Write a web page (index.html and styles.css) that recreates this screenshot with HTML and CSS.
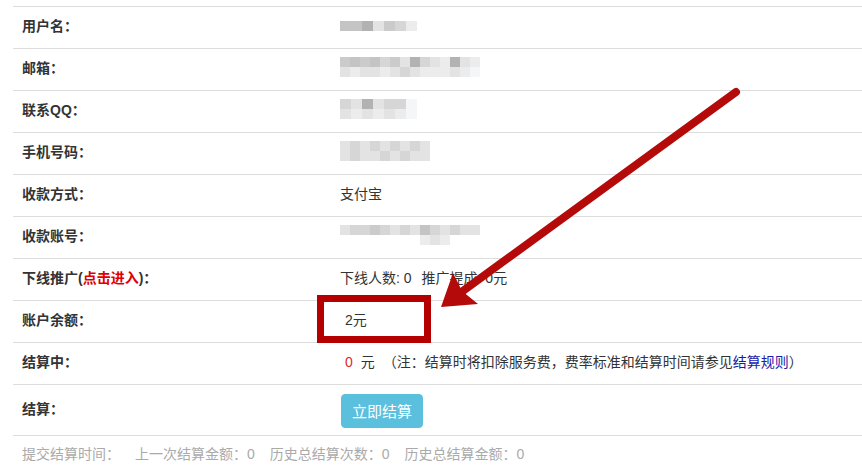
FILE: index.html
```html
<!DOCTYPE html>
<html lang="zh-CN">
<head>
<meta charset="utf-8">
<title>账户信息</title>
<link rel="stylesheet" href="styles.css">
</head>
<body>
<div class="page">
  <div class="table">
    <div class="row">
      <div class="label">用户名：</div>
      <div class="value">
        <span class="mosaic cols7">
          <i class="s2"></i><i class="s2"></i><i class="s4"></i><i class="s6"></i><i class="s3"></i><i class="s5"></i><i class="s7"></i>
        </span>
      </div>
    </div>
    <div class="row">
      <div class="label">邮箱：</div>
      <div class="value">
        <span class="mosaic cols14">
          <i class="s3"></i><i class="s2"></i><i class="s3"></i><i class="s2"></i><i class="s5"></i><i class="s3"></i><i class="s6"></i><i class="s4"></i><i class="s5"></i><i class="s6"></i><i class="s7"></i><i class="s4"></i><i class="s6"></i><i class="s7"></i>
          <i class="s6"></i><i class="s7"></i><i class="s6"></i><i class="s6"></i><i class="s7"></i><i class="s6"></i><i class="s5"></i><i class="s6"></i><i class="s7"></i><i class="s7"></i><i class="s7"></i><i class="s6"></i><i class="s7"></i><i class="s8"></i>
        </span>
      </div>
    </div>
    <div class="row">
      <div class="label">联系QQ：</div>
      <div class="value">
        <span class="mosaic cols7">
          <i class="s5"></i><i class="s6"></i><i class="s4"></i><i class="s6"></i><i class="s5"></i><i class="s5"></i><i class="s8"></i>
          <i class="s6"></i><i class="s7"></i><i class="s6"></i><i class="s7"></i><i class="s6"></i><i class="s7"></i><i class="s8"></i>
        </span>
      </div>
    </div>
    <div class="row">
      <div class="label">手机号码：</div>
      <div class="value">
        <span class="mosaic cols9">
          <i class="s6"></i><i class="s5"></i><i class="s6"></i><i class="s5"></i><i class="s6"></i><i class="s5"></i><i class="s6"></i><i class="s5"></i><i class="s6"></i>
          <i class="s6"></i><i class="s5"></i><i class="s6"></i><i class="s6"></i><i class="s5"></i><i class="s6"></i><i class="s5"></i><i class="s6"></i><i class="s6"></i>
        </span>
      </div>
    </div>
    <div class="row">
      <div class="label">收款方式：</div>
      <div class="value">支付宝</div>
    </div>
    <div class="row">
      <div class="label">收款账号：</div>
      <div class="value">
        <span class="mosaic cols14">
          <i class="s6"></i><i class="s5"></i><i class="s5"></i><i class="s3"></i><i class="s5"></i><i class="s6"></i><i class="s5"></i><i class="s6"></i><i class="s2"></i><i class="s5"></i><i class="s6"></i><i class="s5"></i><i class="s6"></i><i class="s6"></i>
          <i class="s9"></i><i class="s9"></i><i class="s9"></i><i class="s9"></i><i class="s9"></i><i class="s9"></i><i class="s9"></i><i class="s9"></i><i class="s7"></i><i class="s6"></i><i class="s7"></i><i class="s9"></i><i class="s9"></i><i class="s9"></i>
        </span>
      </div>
    </div>
    <div class="row">
      <div class="label">下线推广<span class="paren">(</span><span class="hot">点击进入</span><span class="paren">)</span>：</div>
      <div class="value">下线人数: 0<span class="gap">推广提成: 0元</span></div>
    </div>
    <div class="row">
      <div class="label">账户余额：</div>
      <div class="value"><span class="indent">2元</span></div>
    </div>
    <div class="row">
      <div class="label">结算中：</div>
      <div class="value"><span class="indent zero">0</span><span class="unit">元</span><span class="note">（注：结算时将扣除服务费，费率标准和结算时间请参见<a class="rule" href="#">结算规则</a>）</span></div>
    </div>
    <div class="row row-btn">
      <div class="label">结算：</div>
      <div class="value"><button class="btn" type="button">立即结算</button></div>
    </div>
    <div class="footer">
      <span class="stat">提交结算时间：</span><span class="stat">上一次结算金额：0</span><span class="stat">历史总结算次数：0</span><span class="stat">历史总结算金额：0</span>
    </div>
  </div>

  <div class="highlight"></div>
  <svg class="arrow" width="862" height="470" viewBox="0 0 862 470" xmlns="http://www.w3.org/2000/svg">
    <line x1="736" y1="92" x2="456" y2="296" stroke="#b50a0a" stroke-width="8" stroke-linecap="round"/>
    <polygon points="441,307 453,273 462,291 478,304" fill="#b50a0a"/>
  </svg>
</div>
</body>
</html>
```
FILE: styles.css
```css
html, body {
  margin: 0;
  padding: 0;
  background: #fff;
}

.page {
  position: relative;
  width: 862px;
  height: 470px;
  overflow: hidden;
  font-family: "Liberation Sans", "Noto Sans CJK SC", sans-serif;
  font-size: 14px;
  color: #333;
}

.table {
  margin-left: 13px;
  padding-top: 6px;
}

.row {
  display: grid;
  grid-template-columns: 327px 1fr;
  align-items: center;
  height: 42px;
  box-sizing: border-box;
  border-top: 1px solid #ddd;
}

.row > .label,
.row > .value {
  margin-bottom: 6px;
}

.row-btn {
  height: 51px;
}

.row-btn > .label {
  margin-bottom: 4px;
}

.row-btn > .value {
  margin-bottom: 0;
}

.label {
  padding-left: 9px;
  font-weight: bold;
  color: #333;
  white-space: nowrap;
}

.paren {
  font-weight: bold;
  color: #333;
}

.hot {
  color: #e00000;
}

.value {
  white-space: nowrap;
  color: #333;
}

.gap {
  margin-left: 10px;
}

.indent {
  margin-left: 5px;
}

.zero {
  color: #e0282d;
}

.unit {
  margin-left: 8px;
}

.note {
  margin-left: 8px;
}

.rule {
  color: #1b1ba8;
  text-decoration: none;
}

.btn {
  font-family: "Liberation Sans", "Noto Sans CJK SC", sans-serif;
  font-size: 15px;
  color: #fff;
  background: #5bc0de;
  border: 1px solid #5bc0de;
  border-radius: 4px;
  width: 82px;
  height: 34px;
  padding: 0;
  margin-left: 1px;
  margin-top: 1px;
}

.footer {
  border-top: 1px solid #ddd;
  padding: 8px 0 0 9px;
  line-height: 20px;
  color: #aaa;
  white-space: nowrap;
}

.stat {
  margin-right: 15px;
}

.mosaic {
  display: inline-grid;
  grid-auto-rows: 10px;
  vertical-align: middle;
}

.mosaic i {
  display: block;
}

.cols7 { grid-template-columns: repeat(7, 11px); }
.cols9 { grid-template-columns: repeat(9, 10px); }
.cols14 { grid-template-columns: repeat(14, 10px); }

.s2 { background: #c4c4c4; }
.s3 { background: #cbcbcb; }
.s4 { background: #b2b2b2; }
.s5 { background: #d6d6d6; }
.s6 { background: #e3e3e3; }
.s7 { background: #ececec; }
.s8 { background: #f4f6f8; }
.s9 { background: transparent; }

.highlight {
  position: absolute;
  left: 317px;
  top: 295px;
  width: 114px;
  height: 48px;
  box-sizing: border-box;
  border: 7px solid #b50000;
}

.arrow {
  position: absolute;
  left: 0;
  top: 0;
  pointer-events: none;
}
```
